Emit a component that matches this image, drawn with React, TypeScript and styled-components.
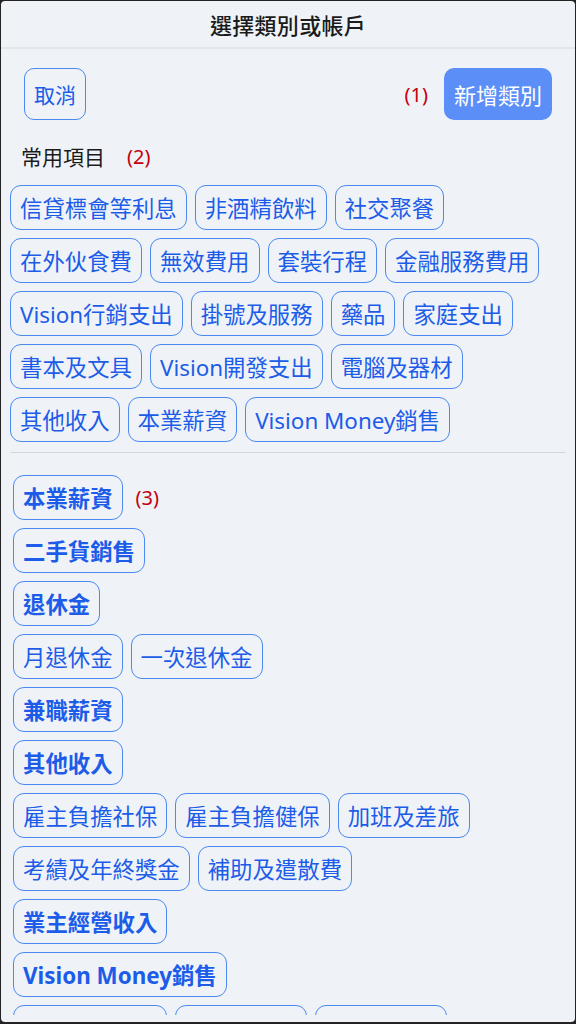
import styled, { createGlobalStyle } from "styled-components";

const GlobalStyle = createGlobalStyle`
  html, body {
    margin: 0;
    padding: 0;
    background: #232323;
  }
  body {
    font-family: "Noto Sans", "Noto Sans CJK TC", sans-serif;
  }
`;

const Screen = styled.div`
  margin: 1px 1px 2px;
  height: 1021px;
  border-radius: 4px;
  overflow: hidden;
  background: #eff3f7;
  color: #1b1b1b;
`;

const Header = styled.header`
  height: 46px;
  display: flex;
  align-items: center;
  justify-content: center;
  border-bottom: 2px solid #e2e5e9;
  font-size: 22px;
  font-weight: 500;
  letter-spacing: 0.3px;
`;

const ScrollArea = styled.main`
  height: 966px;
  overflow: hidden;
`;

const Toolbar = styled.div`
  display: flex;
  align-items: center;
  padding: 19px 23px 0 23px;
`;

const Spacer = styled.div`
  flex: 1;
`;

const OutlineButton = styled.button`
  height: 52px;
  padding: 0 9px;
  border: 1px solid #4b88f2;
  border-radius: 10px;
  background: transparent;
  color: #1c5ce8;
  font-family: inherit;
  font-size: 21px;
`;

const FilledButton = styled.button`
  height: 52px;
  padding: 0 10px;
  border: none;
  border-radius: 10px;
  background: #5b8ff7;
  color: #fff;
  font-family: inherit;
  font-size: 22px;
`;

const Marker = styled.span<{ $gap?: number }>`
  color: #c4000b;
  font-size: 20px;
  margin: 0 ${(p) => p.$gap ?? 0}px 0 0;
`;

const SectionLabel = styled.div`
  display: flex;
  align-items: center;
  gap: 22px;
  padding: 19px 0 0 20px;
  height: 34px;
  font-size: 21px;
`;

const ChipWrap = styled.div<{ $left: number; $top?: number }>`
  display: flex;
  flex-wrap: wrap;
  gap: 8px;
  padding: ${(p) => p.$top ?? 0}px 8px 0 ${(p) => p.$left}px;
`;

const Chip = styled.div<{ $bold?: boolean }>`
  box-sizing: border-box;
  height: 45px;
  display: inline-flex;
  align-items: center;
  padding: 0 9px;
  border: 1px solid #4b88f2;
  border-radius: 11px;
  color: #1c5ce8;
  font-size: 22.4px;
  font-weight: ${(p) => (p.$bold ? 700 : 400)};
  white-space: nowrap;
`;

const Divider = styled.hr`
  margin: 10px 9px 22px;
  border: none;
  border-top: 1px solid #d3d6da;
`;

const Groups = styled.div`
  display: flex;
  flex-direction: column;
  gap: 8px;
`;

const ParentRow = styled.div`
  display: flex;
  align-items: center;
  gap: 13px;
  padding-left: 12px;
`;

const favourites = [
  "信貸標會等利息",
  "非酒精飲料",
  "社交聚餐",
  "在外伙食費",
  "無效費用",
  "套裝行程",
  "金融服務費用",
  "Vision行銷支出",
  "掛號及服務",
  "藥品",
  "家庭支出",
  "書本及文具",
  "Vision開發支出",
  "電腦及器材",
  "其他收入",
  "本業薪資",
  "Vision Money銷售",
];

type Group = { name: string; marker?: string; children: string[] };

const groups: Group[] = [
  { name: "本業薪資", marker: "(3)", children: [] },
  { name: "二手貨銷售", children: [] },
  { name: "退休金", children: ["月退休金", "一次退休金"] },
  { name: "兼職薪資", children: [] },
  { name: "其他收入", children: ["雇主負擔社保", "雇主負擔健保", "加班及差旅", "考績及年終獎金", "補助及遣散費"] },
  { name: "業主經營收入", children: [] },
  { name: "Vision Money銷售", children: ["商品銷售收入", "服務費收入", "授權金收入"] },
];

export default function App() {
  return (
    <>
      <GlobalStyle />
      <Screen>
        <Header>選擇類別或帳戶</Header>
        <ScrollArea>
          <Toolbar>
            <OutlineButton>取消</OutlineButton>
            <Spacer />
            <Marker $gap={16}>(1)</Marker>
            <FilledButton>新增類別</FilledButton>
          </Toolbar>
          <SectionLabel>
            常用項目
            <Marker>(2)</Marker>
          </SectionLabel>
          <ChipWrap $left={9} $top={12}>
            {favourites.map((f) => (
              <Chip key={f}>{f}</Chip>
            ))}
          </ChipWrap>
          <Divider />
          <Groups>
            {groups.map((g) => (
              <Groups key={g.name}>
                <ParentRow>
                  <Chip $bold>{g.name}</Chip>
                  {g.marker && <Marker>{g.marker}</Marker>}
                </ParentRow>
                {g.children.length > 0 && (
                  <ChipWrap $left={12}>
                    {g.children.map((c) => (
                      <Chip key={c}>{c}</Chip>
                    ))}
                  </ChipWrap>
                )}
              </Groups>
            ))}
          </Groups>
        </ScrollArea>
      </Screen>
    </>
  );
}
